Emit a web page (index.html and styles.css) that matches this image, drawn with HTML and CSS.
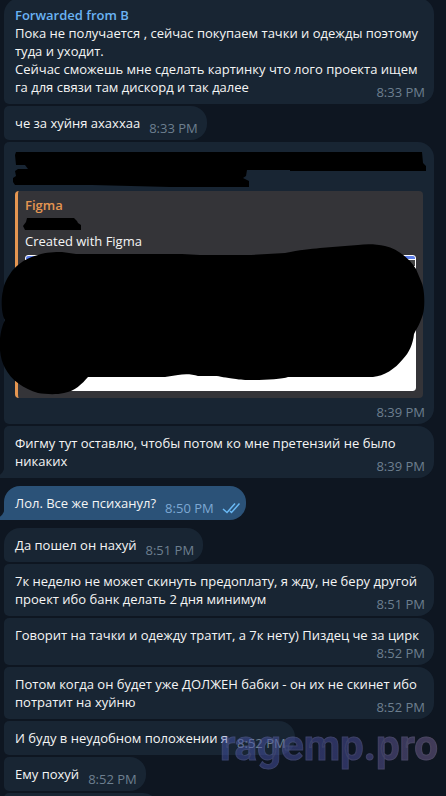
FILE: index.html
```
<!DOCTYPE html>
<html lang="ru">
<head>
    <meta charset="UTF-8">
    <meta name="viewport" content="width=device-width, initial-scale=1.0">
    <title>Chat</title>
    <link rel="stylesheet" href="styles.css">
</head>
<body>
    <main class="chat">
        <div class="message first">
            <div class="forwarded">Forwarded from В</div>
            Пока не получается , сейчас покупаем тачки и одежды поэтому туда и уходит.<br>
            Сейчас сможешь мне сделать картинку что лого проекта ищем га для связи там дискорд и так далее
            <time class="time">8:33 PM</time>
        </div>

        <div class="message">че за хуйня ахаххаа <time class="time">8:33 PM</time></div>

        <!-- Link preview, hidden parts are painted over -->
        <div class="message wide">
            <div class="hidden-link"></div>
            <div class="preview">
                <div class="preview-title">Figma</div>
                <div class="preview-name"></div>
                <div>Created with Figma</div>
                <div class="preview-image"></div>
            </div>
            <time class="time">8:39 PM</time>
            <svg class="paint" viewBox="0 142 446 282" width="446" height="282" aria-hidden="true">
                <path d="M16 152H422L423 163L426 166V171H290V170H247L246 176L243 178L249 181V187H170L92 185H15L13 182V178L16 176L15 171L18 169H28L25 165L16 165L15 155Z"/>
                <path d="M27 218H74L77 221L78 223L81 225V230H25L23 226L26 222Z"/>
                <path d="M12 271C18 264 26 258 38 255C46 252 55 252 62 252L76 254H182L200 255H251L285 253C300 250 310 249 320 248L345 246L358 245C366 244 376 244 385 246C398 249 410 259 416 269L421 281C425 289 425 307 423 314C421 321 418 327 416 330L414 334C413 344 409 353 403 359C395 369 384 376 373 377H288C280 380 245 381 236 379C225 378 220 376 215 376H198C192 374 184 374 178 375L165 377H88C82 384 75 391 64 393C55 395 45 394 38 393C24 389 11 380 5 368C-1 358 -3 336 5 320C1 314 1 297 3 291C4 283 8 277 12 271Z"/>
            </svg>
        </div>

        <div class="message tail">Фигму тут оставлю, чтобы потом ко мне претензий не было никаких <time class="time">8:39 PM</time></div>

        <div class="message own first tail">Лол. Все же психанул?
            <span class="time">
                <time>8:50 PM</time>
                <svg class="ticks" viewBox="0 0 18 12" width="18" height="12" role="img" aria-label="Read">
                    <path d="M1 7L5 10.500L13 1.500M8 9L9.500 10.500L17.500 1.500"/>
                </svg>
            </span>
        </div>

        <div class="message first">Да пошел он нахуй <time class="time">8:51 PM</time></div>
        <div class="message">7к неделю не может скинуть предоплату, я жду, не беру другой проект ибо банк делать 2 дня минимум <time class="time">8:51 PM</time></div>
        <div class="message">Говорит на тачки и одежду тратит, а 7к нету) Пиздец че за цирк <time class="time below">8:52 PM</time></div>
        <div class="message">Потом когда он будет уже ДОЛЖЕН бабки - он их не скинет ибо потратит на хуйню <time class="time">8:52 PM</time></div>
        <div class="message">И буду в неудобном положении я <time class="time">8:52 PM</time></div>
        <div class="message">Ему похуй <time class="time">8:52 PM</time></div>
        <div class="message next"></div>
    </main>

    <div class="watermark">ragemp.pro</div>
</body>
</html>
```

FILE: styles.css
```
* {
    margin: 0;
    padding: 0;
    box-sizing: border-box;
}

body {
    font-family: "Open Sans", "Noto Sans", sans-serif;
    font-size: 13px;
    line-height: 18px;
    background-color: #0e1621;
    color: #f5f5f5;
}

.chat {
    display: flex;
    flex-direction: column;
    align-items: flex-start;
    gap: 2px;
    height: 100vh;
    padding: 0 12px 0 4px;
    overflow: hidden;
}

/* Messages */
.message {
    position: relative;
    flex-shrink: 0;
    max-width: 100%;
    padding: 8px 9px 3px 11px;
    background-color: #182533;
    border-radius: 5px 16px 16px 5px;
}

.message::after {
    content: "";
    display: block;
    clear: both;
}

.first {
    margin-top: 6px;
    border-top-left-radius: 16px;
}

.first:first-child {
    margin-top: -2px;
}

.wide {
    width: 100%;
}

.own {
    background-color: #2b5278;
}

.tail {
    border-bottom-left-radius: 0;
}

.tail::before {
    content: "";
    position: absolute;
    left: -10px;
    bottom: 0;
    width: 10px;
    height: 12px;
    background: radial-gradient(circle at 0 0, transparent 10px, #182533 11px);
}

.own.tail::before {
    background: radial-gradient(circle at 0 0, transparent 10px, #2b5278 11px);
}

.next {
    width: 155px;
    height: 34px;
}

.forwarded {
    font-weight: 600;
    color: #6ab3f3;
}

.time {
    float: right;
    margin: 5px 0 0 9px;
    color: #6d7f8f;
}

.below {
    margin-top: 0;
}

.own .time {
    display: flex;
    align-items: center;
    gap: 8px;
    margin-right: -3px;
    color: #7da8d3;
}

.ticks {
    fill: none;
    stroke: #6ab9f5;
    stroke-width: 1.5;
}

/* Link preview */
.hidden-link {
    height: 36px;
}

.preview {
    margin: 5px 2px 0 0;
    padding: 5px 7px 7px;
    border-left: 3px solid #e59651;
    border-radius: 4px;
    background-color: #343438;
}

.preview-title {
    font-weight: 600;
    color: #e59651;
}

.preview-name {
    height: 18px;
}

.preview-image {
    height: 136px;
    margin-top: 5px;
    border: 1px solid #fff;
    border-radius: 3px 3px 3px 16px;
    background: linear-gradient(#5b7de8 3px, #fff 3px, #fff 4px, #444 4px, #444 10px, #fff 10px);
}

.paint {
    position: absolute;
    left: -4px;
    top: 0;
}

/* Watermark */
.watermark {
    position: absolute;
    right: 8px;
    bottom: 26px;
    font-family: Roboto, sans-serif;
    font-size: 42px;
    font-weight: 700;
    line-height: 48px;
    color: transparent;
    background: linear-gradient(90deg, rgba(72, 88, 180, 0.45), rgba(84, 84, 170, 0.45) 60%, rgba(130, 105, 155, 0.45));
    -webkit-background-clip: text;
    background-clip: text;
    -webkit-text-stroke: 1px rgba(130, 130, 140, 0.2);
}
```
